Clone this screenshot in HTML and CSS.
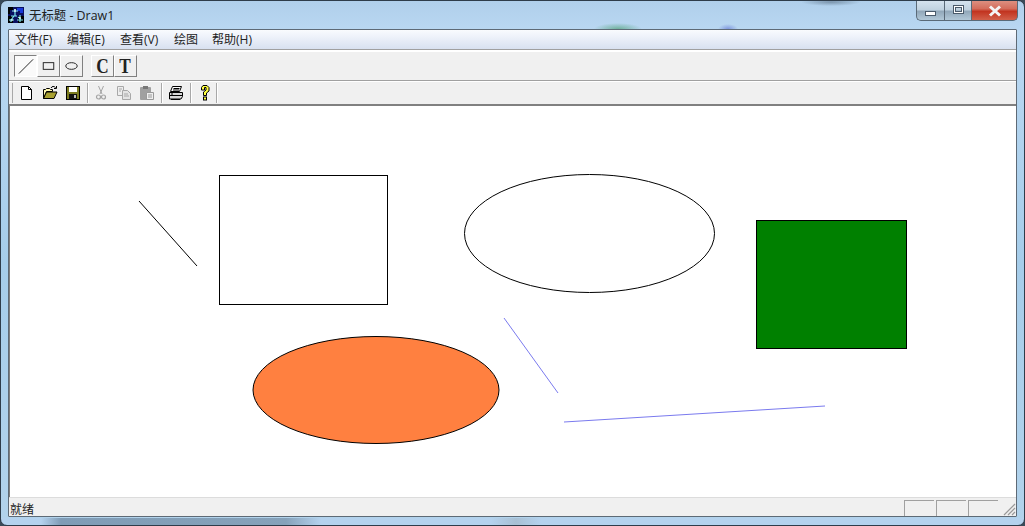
FILE: index.html
```html
<!DOCTYPE html>
<html lang="zh">
<head>
<meta charset="utf-8">
<title>无标题 - Draw1</title>
<link rel="stylesheet" href="styles.css">
</head>
<body>
<div class="window">
  <header class="titlebar">
    <svg class="appicon" width="16" height="16" viewBox="0 0 16 16"><rect width="16" height="16" fill="#0a1060"/><path d="M0 0h5v3H2v4H0z" fill="#000"/><path d="M9 1h6v5h-3V4H9z" fill="#1838d8"/><path d="M0 9h5v7H0z" fill="#000"/><path d="M10 9h6v7h-6z" fill="#000"/><path d="M7 2v7M4 4h6M3 9h6M6 9l-3 4M3 12v3M1 13h5M10 10l3 2M12 8v7M9 13h6" stroke="#7fe8f0" stroke-width="1.2" fill="none"/><path d="M7 2v3M3 13h2M12 10v2" stroke="#fff" stroke-width="1.2"/></svg>
    <span class="title">无标题 - Draw1</span>
    <div class="caption">
      <div class="cap cap-min"><span class="min-glyph"></span></div>
      <div class="cap cap-max"><span class="max-glyph"></span></div>
      <div class="cap cap-close"><svg width="16" height="12" viewBox="0 0 16 12"><path d="M3 1.5 13 10.5M13 1.5 3 10.5" stroke="#f4f4f4" stroke-width="3"/></svg></div>
    </div>
  </header>
  <div class="client">
    <nav class="menubar">
      <span class="menu m1">文件(F)</span>
      <span class="menu m2">编辑(E)</span>
      <span class="menu m3">查看(V)</span>
      <span class="menu m4">绘图</span>
      <span class="menu m5">帮助(H)</span>
    </nav>
    <div class="toolbar tb-draw">
      <button class="tbtn pressed"><svg width="22" height="22" viewBox="0 0 22 22"><path d="M4 19 19 4" stroke="#222" fill="none"/></svg></button>
      <button class="tbtn"><svg width="22" height="22" viewBox="0 0 22 22"><rect x="5.5" y="7.5" width="11" height="7" fill="none" stroke="#222"/></svg></button>
      <button class="tbtn"><svg width="22" height="22" viewBox="0 0 22 22"><ellipse cx="11" cy="11" rx="6" ry="3.5" fill="none" stroke="#222"/></svg></button>
      <span class="gap"></span>
      <button class="tbtn letter"><span class="glyph">C</span></button>
      <button class="tbtn letter"><span class="glyph">T</span></button>
    </div>
    <div class="toolbar tb-std">
      <span class="grip"></span>
      <span class="ico"><svg width="16" height="16" viewBox="0 0 16 16"><path d="M2.500 1.500h7l3 3v10h-10z" fill="#fff" stroke="#000"/><path d="M9.500 1.500v3h3" fill="none" stroke="#000"/></svg></span>
      <span class="ico"><svg width="16" height="16" viewBox="0 0 16 16"><path d="M1.500 13.500v-9h2l1-1h3l1 1h2v2h-6l-3 7z" fill="#fff8b0" stroke="#000"/><path d="M1.500 13.500l3-6.500h10.500l-3 6.500z" fill="#a8a030" stroke="#000"/><path d="M9 3c1-2 3-2 4.500-.5M14.500 1v2.500H12" fill="none" stroke="#000"/></svg></span>
      <span class="ico"><svg width="16" height="16" viewBox="0 0 16 16"><rect x="1.500" y="1.500" width="13" height="13" fill="#7c7c20" stroke="#000"/><rect x="4" y="2" width="8" height="5" fill="#fff"/><rect x="4" y="9" width="8" height="5" fill="#111"/><rect x="9" y="10" width="2" height="3" fill="#bbb"/></svg></span>
      <span class="sep sep-first"></span>
      <span class="ico"><svg width="16" height="16" viewBox="0 0 16 16"><path d="M5.500 1 9 9M10.500 1 7 9" stroke="#a4a4a4" fill="none"/><circle cx="5.500" cy="12" r="2" fill="none" stroke="#a4a4a4" stroke-width="1.200"/><circle cx="10.500" cy="12" r="2" fill="none" stroke="#a4a4a4" stroke-width="1.200"/></svg></span>
      <span class="ico"><svg width="16" height="16" viewBox="0 0 16 16"><path d="M1.500 1.500h6v9h-6z" fill="#eee" stroke="#a8a8a8"/><path d="M6.500 5.500h5l3 3v6h-8z" fill="#e4e4e4" stroke="#a8a8a8"/><path d="M3 4h3M3 6h2M8 9h4M8 11h5" stroke="#a8a8a8"/></svg></span>
      <span class="ico"><svg width="16" height="16" viewBox="0 0 16 16"><rect x="1" y="2" width="11" height="13" rx="1" fill="#a0a0a0"/><rect x="4" y="1" width="5" height="3" fill="#777"/><path d="M7.500 7.500h7v7h-7z" fill="#eee" stroke="#999"/><path d="M9 10h4M9 12h4" stroke="#999"/></svg></span>
      <span class="sep"></span>
      <span class="ico"><svg width="16" height="16" viewBox="0 0 16 16"><path d="M4.500 1.500h9l-2 5h-9z" fill="#fff" stroke="#000"/><path d="M5.500 3.500h6M5 5h6" stroke="#000"/><path d="M1.500 7.500h13v4l-1.500 2.500h-11.500z" fill="#d8d8d8" stroke="#000"/><path d="M2 10.500h12M3 14.500h9" stroke="#000"/><rect x="3" y="8.500" width="2" height="1" fill="#000"/></svg></span>
      <span class="sep"></span>
      <span class="ico"><svg width="16" height="18" viewBox="0 0 16 18"><path d="M4.500 6V3.500L6 1.500h4l2 2V7L9.500 9v2.500h-3V8L9 6V3.500H7.500V6z" fill="#ffff40" stroke="#000"/><rect x="6.500" y="13" width="3" height="3" fill="#ffff40" stroke="#000"/></svg></span>
      <span class="sep sep-last"></span>
    </div>
    <main class="canvas">
      <svg class="drawing" viewBox="10 106 1006 392" width="1006" height="392">
        <line x1="139" y1="201" x2="197" y2="266" stroke="#000"/>
        <rect x="219.500" y="175.500" width="168" height="129" fill="#fff" stroke="#000"/>
        <ellipse cx="589.500" cy="233.500" rx="125" ry="59" fill="#fff" stroke="#000"/>
        <rect x="756.500" y="220.500" width="150" height="128" fill="#008000" stroke="#000"/>
        <ellipse cx="376" cy="390" rx="123" ry="53.500" fill="#ff8040" stroke="#000"/>
        <line x1="504" y1="318" x2="558" y2="393" stroke="#7a7aee"/>
        <line x1="564" y1="422" x2="825" y2="406" stroke="#7a7aee"/>
      </svg>
    </main>
    <footer class="statusbar">
      <span class="status-text">就绪</span>
      <span class="pane"></span>
      <span class="pane"></span>
      <span class="pane pane-last"></span>
      <svg class="sizer" width="14" height="14" viewBox="0 0 14 14"><path d="M13 2 2 13M13 6 6 13M13 10 10 13" stroke="#999" stroke-width="1.200"/></svg>
    </footer>
  </div>
</div>
</body>
</html>
```
FILE: styles.css
```css
* { box-sizing: border-box; }
html, body { margin: 0; padding: 0; width: 1025px; height: 526px; overflow: hidden; background: #3a4a58; }
body { font-family: "Open Sans", "Noto Sans CJK SC", sans-serif; font-size: 12px; color: #1c1c1c; }

.window {
  width: 1025px; height: 526px; display: flex; flex-direction: column;
  padding: 0 7px 8px;
  background:
    radial-gradient(ellipse 24px 6px at 617px 28px, rgba(80,160,120,.7), transparent),
    radial-gradient(ellipse 10px 5px at 727px 28px, rgba(90,110,210,.6), transparent),
    radial-gradient(ellipse 30px 4px at 830px 1px, rgba(70,90,110,.5), transparent),
    linear-gradient(90deg, #b4d2ee 40px, #7f9cb6 60px, #86a2ba 285px, #b4d2ee 320px, #b4d2ee 490px, #a8c0d4 515px, #b4d2ee 540px) 0 100% / 100% 7px no-repeat,
    linear-gradient(180deg, #b0cfeb 0%, #bad8f2 6%, #a6cdea 50%, #b2d3ec 100%);
  border: 1px solid #2e3c4a; border-radius: 7px;
}
.titlebar { height: 28px; flex: none; display: flex; align-items: flex-start; margin-right: -1px; }
.appicon { margin-top: 6px; flex: none; }
.title { margin: 6px 0 0 5px; font-size: 12.4px; line-height: 18px; color: #202020; white-space: nowrap; }
.caption { margin-left: auto; display: flex; height: 20px; }
.cap { display: flex; align-items: center; justify-content: center; height: 20px; border: 1px solid #5a6a78; border-top: 0; }
.cap-min { width: 28px; border-right: 0; border-radius: 0 0 0 5px; background: linear-gradient(180deg, #d4e2ee 0%, #c0d2e0 45%, #92a8ba 55%, #b2c8d8 100%); }
.cap-max { width: 27px; border-right: 0; background: linear-gradient(180deg, #d4e2ee 0%, #c0d2e0 45%, #92a8ba 55%, #b2c8d8 100%); }
.cap-close { width: 47px; border-radius: 0 0 5px 0; background: linear-gradient(180deg, #dd8f80 0%, #d46d5c 40%, #c23420 55%, #d2604a 100%); }
.min-glyph { width: 11px; height: 5px; margin-top: 5px; background: #fff; border: 1px solid #4a5a6a; }
.max-glyph { width: 11px; height: 9px; background: transparent; border: 1px solid #4a5a6a; box-shadow: inset 0 0 0 1px #fff, inset 0 0 0 2px #4a5a6a; margin-top: -2px; }

.client { flex: 1; min-height: 0; display: flex; flex-direction: column; background: #f0f0f0; border: 1px solid #5e6a76; border-radius: 1px; }
.menubar { height: 20px; flex: none; display: flex; align-items: center; background: linear-gradient(180deg, #f9fbfe 0%, #eef2fa 35%, #d8e1f0 100%); font-size: 12px; color: #222; border-bottom: 1px solid #a0a0a0; box-shadow: 0 1px 0 #fff; }
.menu { line-height: 20px; white-space: nowrap; }
.m1 { margin-left: 6px; width: 52px; }
.m2 { width: 53px; }
.m3 { width: 54px; }
.m4 { width: 38px; }

.toolbar { flex: none; display: flex; align-items: center; background: #f0f0f0; border-top: 1px solid #fff; }
.tb-draw { height: 30px; border-bottom: 1px solid #a0a0a0; padding-left: 5px; margin-top: 1px; }
.tb-std { height: 25px; padding-left: 3px; border-bottom: 2px solid #808080; }
.grip { width: 1px; height: 20px; background: #a8a8a8; margin-right: 2px; flex: none; }
.tbtn { width: 23px; height: 22px; padding: 0; display: flex; align-items: center; justify-content: center; background: #f0f0f0; border: 1px solid; border-color: #fff #808080 #808080 #fff; font-family: "Liberation Serif", serif; }
.tbtn.pressed { border-color: #808080 #fff #fff #808080; background: #fafafa; }
.letter { font-size: 21px; font-weight: bold; color: #222; line-height: 20px; }
.glyph { display: block; transform: scaleX(.82); }
.gap { width: 8px; }
.ico { width: 23px; height: 22px; display: flex; align-items: center; justify-content: center; flex: none; }
.sep { width: 2px; height: 20px; margin: 0 1px 0 3px; background: linear-gradient(90deg, #a8a8a8 50%, #fff 50%); flex: none; }
.sep-first { margin-right: 0; }
.sep-last { margin-left: 0; }

.canvas { flex: 1; min-height: 0; background: #fff; border-left: 1px solid #808080; overflow: hidden; }
.drawing { display: block; }

.statusbar { height: 19px; flex: none; display: flex; align-items: center; background: #f0f0f0; border-top: 1px solid #dcdcdc; position: relative; padding: 2px 0 0 1px; font-size: 12px; color: #1c1c1c; }
.status-text { margin-right: auto; margin-top: 4px; line-height: 16px; }
.pane { width: 30px; height: 16px; margin-right: 2px; border-top: 1px solid #a0a0a0; border-left: 1px solid #a0a0a0; }
.pane-last { margin-right: 18px; }
.sizer { position: absolute; right: 0; bottom: 0; }
```
